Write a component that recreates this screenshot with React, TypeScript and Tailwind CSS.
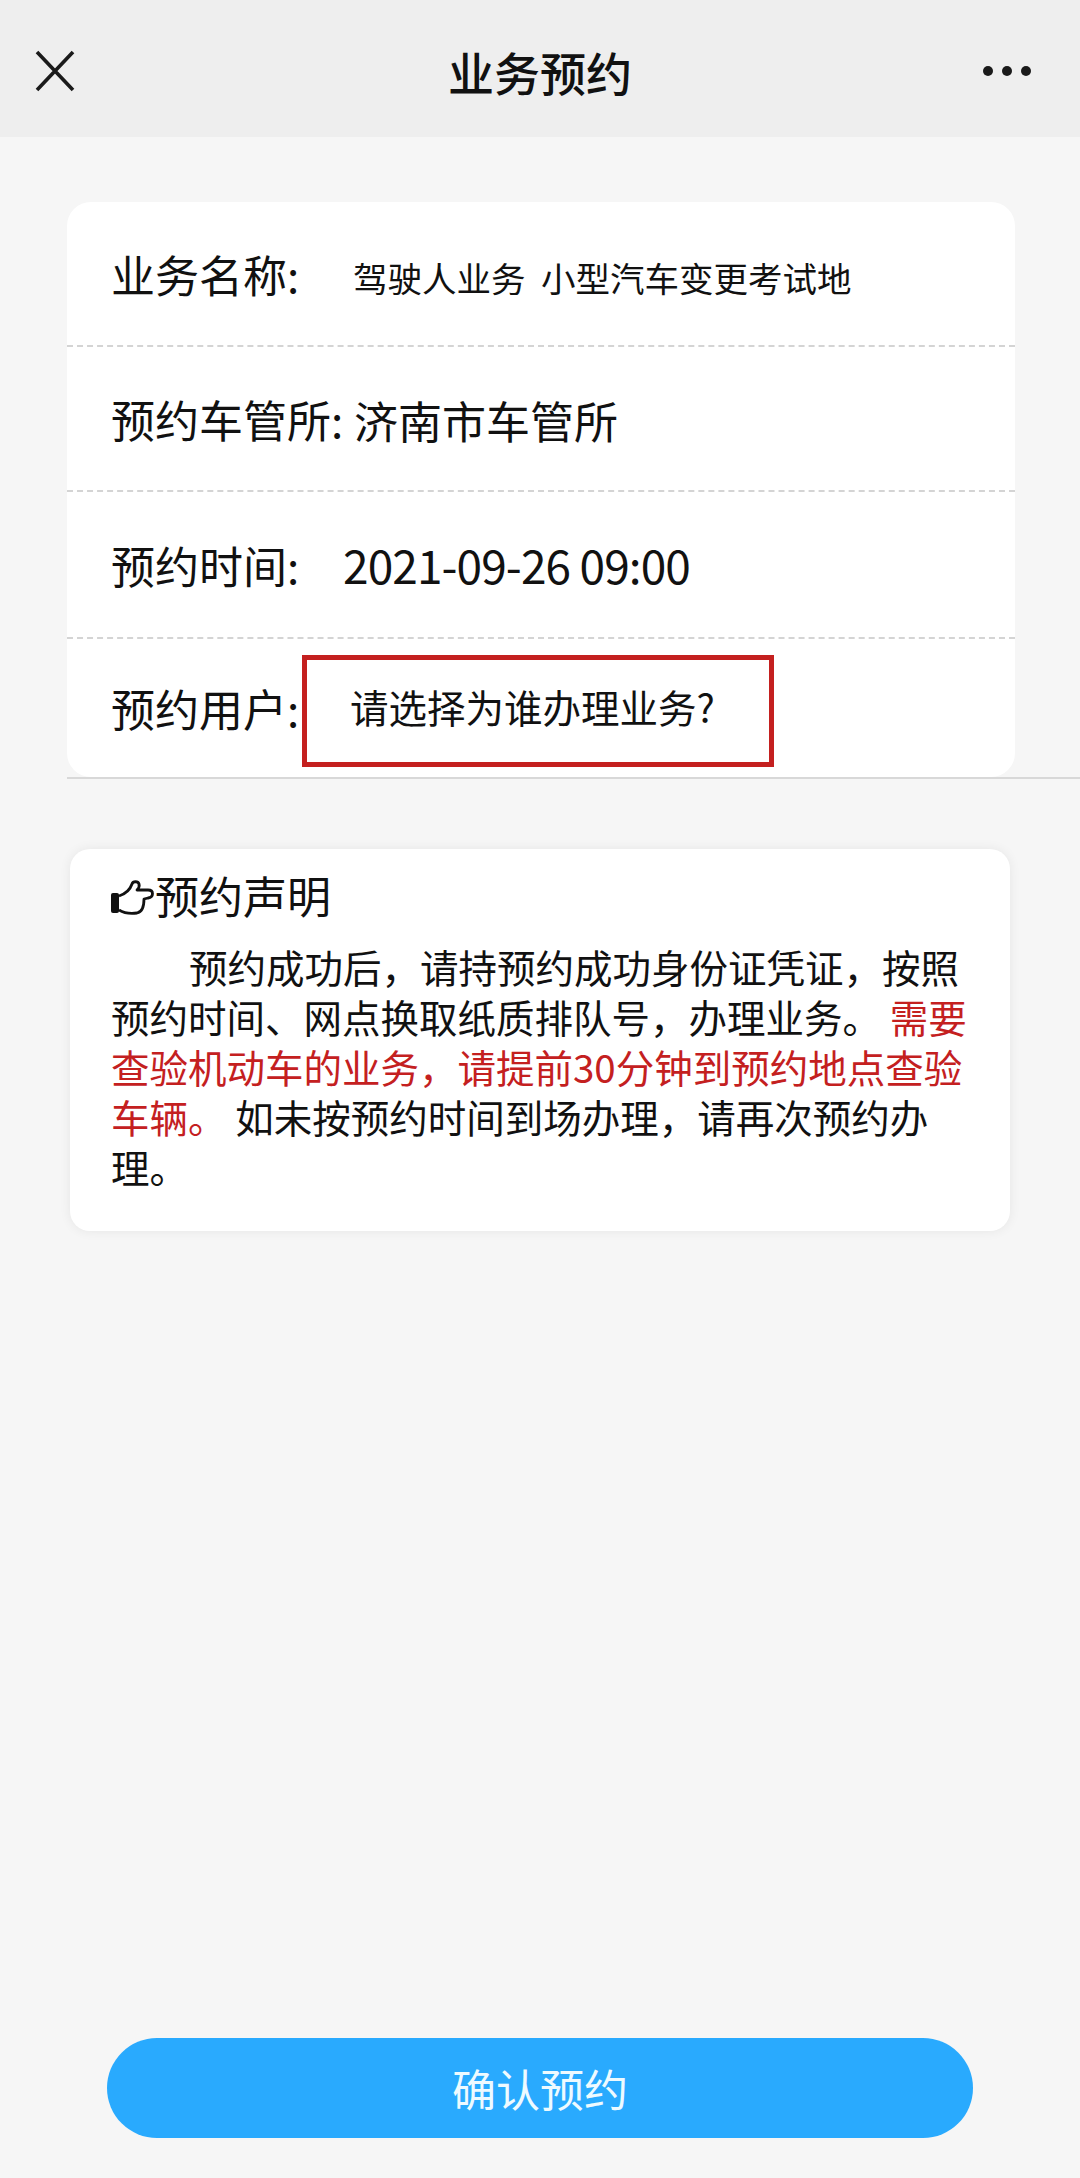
const cjk = { fontFamily: '"Noto Sans CJK SC", sans-serif' }

const App = () => {
    return (
        <div className="flex h-[2178px] w-[1080px] flex-col bg-[#f6f6f6] text-[#111]" style={cjk}>
            {/* Top bar */}
            <div className="flex h-[137px] shrink-0 items-center bg-[#eeeeee] px-[34px] pt-[4px]">
                <div className="flex-1">
                    <svg width="42" height="42" viewBox="0 0 42 42" fill="none" stroke="#1a1a1a" strokeWidth="3.6">
                        <path d="M3 2 L39 40 M39 2 L3 40" />
                    </svg>
                </div>
                <h1 className="text-[46px] font-medium leading-none">业务预约</h1>
                <div className="flex flex-1 justify-end">
                    <div className="mr-[15px] flex gap-[9px]">
                        <span className="h-[10px] w-[10px] rounded-full bg-[#1a1a1a]" />
                        <span className="h-[10px] w-[10px] rounded-full bg-[#1a1a1a]" />
                        <span className="h-[10px] w-[10px] rounded-full bg-[#1a1a1a]" />
                    </div>
                </div>
            </div>

            {/* Info card */}
            <div className="mt-[65px] ml-[67px] border-b-2 border-[#d8d8d8]">
                <div className="w-[948px] rounded-[24px] bg-white">
                    <div className="flex h-[145px] items-center border-b-2 border-dashed border-[#d4d4d4] pl-[44px]">
                        <span className="w-[242px] text-[44px]">业务名称:</span>
                        <span className="pt-[8px] text-[34.5px]">驾驶人业务&nbsp;&nbsp;小型汽车变更考试地</span>
                    </div>
                    <div className="flex h-[145px] items-center border-b-2 border-dashed border-[#d4d4d4] pl-[44px]">
                        <span className="w-[243px] text-[44px] whitespace-nowrap">预约车管所:</span>
                        <span className="pt-[2px] text-[44px]">济南市车管所</span>
                    </div>
                    <div className="flex h-[147px] items-center border-b-2 border-dashed border-[#d4d4d4] pl-[44px]">
                        <span className="w-[232px] text-[44px]">预约时间:</span>
                        <span className="text-[46px] tracking-[-0.9px]">2021-09-26 09:00</span>
                    </div>
                    <div className="flex h-[138px] items-center pl-[44px]">
                        <span className="w-[191px] shrink-0 text-[44px] whitespace-nowrap">预约用户:</span>
                        <div className="mt-[6px] flex h-[112px] w-[472px] items-center border-[5px] border-[#c4201f] pb-[8px] pl-[43px] text-[38.5px]">
                            请选择为谁办理业务?
                        </div>
                    </div>
                </div>
            </div>

            {/* Notice */}
            <div className="mt-[70px] ml-[70px] h-[382px] w-[940px] rounded-[20px] bg-white pt-[16px] pl-[41px] pr-[30px] shadow-[0_0_12px_rgba(0,0,0,0.07)]">
                <div className="flex items-center text-[44px] leading-[60px]">
                    <svg width="44" height="36" viewBox="0 0 44 36" className="mt-[6px] shrink-0" fill="none" stroke="#111" strokeWidth="2.8" strokeLinejoin="round">
                        <rect x="0" y="13" width="8" height="20" rx="2" fill="#111" stroke="none" />
                        <path d="M8 16 C14 14 19 10 21 4 C22 1 27 1 28 4 C29 7 27 9 26 10 L37 10 C43 10 43 17 37 18 L33 19 C33 26 31 32 26 33 C19 34 13 33 8 30" />
                    </svg>
                    <span>预约声明</span>
                </div>
                <p className="mt-[16px] indent-[78px] text-[38.5px] leading-[50px]">
                    预约成功后，请持预约成功身份证凭证，按照预约时间、网点换取纸质排队号，办理业务。{" "}
                    <span className="text-[#c4201f]">需要查验机动车的业务，请提前30分钟到预约地点查验车辆。</span>{" "}
                    如未按预约时间到场办理，请再次预约办理。
                </p>
            </div>

            {/* Confirm */}
            <div className="mt-auto mb-[40px] flex justify-center">
                <button className="h-[100px] w-[866px] rounded-full bg-[#29aafe] text-[44px] text-[#eefaff]">确认预约</button>
            </div>
        </div>
    )
}

export default App
